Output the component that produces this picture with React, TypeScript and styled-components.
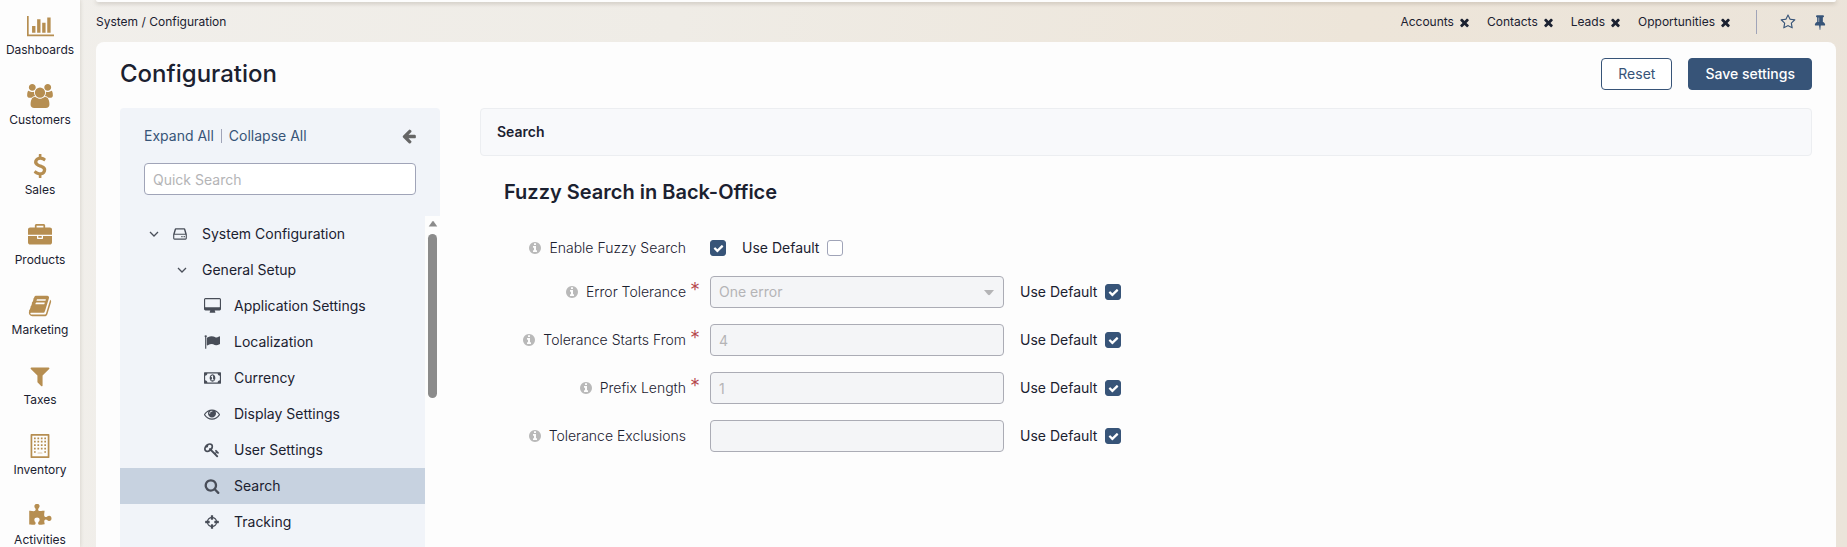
import React from "react";
import styled, { createGlobalStyle, css } from "styled-components";

const colors = {
  text: "#1b2130",
  primary: "#375478",
  gold: "#b68e51",
  panel: "#f1f4f9",
  surface: "#fdfdfd",
  field: "#f4f5f7",
  muted: "#b4b4b6",
  border: "#a0a4b8",
};

const GlobalStyle = createGlobalStyle`
  *, *::before, *::after { box-sizing: border-box; }
  html, body { margin: 0; padding: 0; }
  body {
    font-family: Inter, "Open Sans", sans-serif;
    font-size: 14px;
    line-height: 20px;
    color: ${colors.text};
  }
  button, input, select { font: inherit; color: inherit; }
  a { color: inherit; text-decoration: none; }
`;

/* ---------- icons ---------- */

const glyphs = {
  chart: { w: 2048, d: "M640 896v512h-256v-512h256zm384-512v1024h-256v-1024h256zm1024 1152v128h-2048v-1536h128v1408h1920zm-640-896v768h-256v-768h256zm384-384v1152h-256v-1152h256z" },
  users: { w: 1920, d: "M593 896q-162 5-265 128h-134q-82 0-138-40.5t-56-118.5q0-353 124-353 6 0 43.5 21t97.5 42.5 119 21.5q67 0 133-23-5 37-5 66 0 139 81 256zm1071 637q0 120-73 189.5t-194 69.5h-874q-121 0-194-69.5t-73-189.5q0-53 3.5-103.5t14-109 26.5-108.5 43-97.5 62-81 85.5-53.5 111.5-20q10 0 43 21.5t73 48 107 48 135 21.5 135-21.5 107-48 73-48 43-21.5q61 0 111.5 20t85.5 53.5 62 81 43 97.5 26.5 108.5 14 109 3.5 103.5zm-1024-1277q0 106-75 181t-181 75-181-75-75-181 75-181 181-75 181 75 75 181zm704 384q0 159-112.5 271.5t-271.5 112.5-271.5-112.5-112.5-271.5 112.5-271.5 271.5-112.5 271.5 112.5 112.5 271.5zm576 225q0 78-56 118.5t-138 40.5h-134q-103-123-265-128 81-117 81-256 0-29-5-66 66 23 133 23 59 0 119-21.5t97.5-42.5 43.5-21q124 0 124 353zm-128-609q0 106-75 181t-181 75-181-75-75-181 75-181 181-75 181 75 75 181z" },
  dollar: { w: 1792, d: "M1362 1185q0 153-99.5 263.5t-258.5 136.5v175q0 14-9 23t-23 9h-135q-13 0-22.5-9.5t-9.5-22.5v-175q-66-9-127.5-31t-101.5-44.5-74-48-46.5-37.5-17.5-18q-17-21-2-41l103-135q7-10 23-12 15-2 24 9l2 2q113 99 243 125 37 8 74 8 81 0 142.5-43t61.5-122q0-28-15-53t-33.5-42-58.5-37.5-66-32-80-32.5q-39-16-61.5-25t-61.5-26.5-62.5-31-56.5-35.5-53.5-42.5-43.5-49-35.5-58-21-66.5-8.5-78q0-138 98-242t255-134v-180q0-13 9.5-22.5t22.5-9.5h135q14 0 23 9t9 23v176q57 6 110.5 23t87 33.5 63.5 37.5 39 29 15 14q17 18 5 38l-81 146q-8 15-23 16-14 3-27-7-3-3-14.5-12t-39-26.5-58.5-32-74.5-26-85.5-11.5q-95 0-155 43t-60 111q0 26 8.5 48t29.5 41.5 39.5 33 56 31 60.5 27 70 27.5q53 20 81 31.5t76 35 75.5 42.5 62 50 53 63.5 31.5 76.5 13 94z" },
  briefcase: { w: 1792, d: "M640 256h512v-128h-512v128zm1152 640v480q0 66-47 113t-113 47h-1472q-66 0-113-47t-47-113v-480h672v160q0 26 19 45t45 19h320q26 0 45-19t19-45v-160h672zm-768 0v128h-256v-128h256zm768-480v384h-1792v-384q0-66 47-113t113-47h352v-160q0-40 28-68t68-28h576q40 0 68 28t28 68v160h352q66 0 113 47t47 113z" },
  book: { w: 1792, d: "M1703 478q40 57 18 129l-275 906q-19 64-76.5 107.5t-122.5 43.5h-923q-77 0-148.5-53.5t-99.5-131.5q-24-67-2-127 0-4 3-27t4-37q1-8-3-21.5t-3-19.5q2-11 8-21t16.5-23.5 16.5-23.5q23-38 45-91.5t30-91.5q3-10 .5-30t-.5-28q3-11 17-28t17-23q21-36 42-92t25-90q1-9-2.5-32t.5-28q4-13 22-30.5t22-22.5q19-26 42.5-84.5t27.5-96.5q1-8-3-25.5t-2-26.5q2-8 9-18t18-23 17-21q8-12 16.5-30.5t15-35 16-36 19.5-32 26.5-23.5 36-11.5 47.5 5.5l-1 3q38-9 51-9h761q74 0 114 56t18 130l-274 906q-36 119-71.5 153.5t-128.5 34.5h-869q-27 0-38 15-11 16-1 43 24 70 144 70h923q29 0 56-15.5t35-41.5l300-987q7-22 5-57 38 15 59 43zm-1064 2q-4 13 2 22.5t20 9.5h608q13 0 25.5-9.5t16.5-22.5l21-64q4-13-2-22.5t-20-9.5h-608q-13 0-25.5 9.5t-16.5 22.5zm-83 256q-4 13 2 22.5t20 9.5h608q13 0 25.5-9.5t16.5-22.5l21-64q4-13-2-22.5t-20-9.5h-608q-13 0-25.5 9.5t-16.5 22.5z" },
  filter: { w: 1792, d: "M1595 295q17 41-14 70l-493 493v742q0 42-39 59-13 5-25 5-27 0-45-19l-256-256q-19-19-19-45v-486l-493-493q-31-29-14-70 17-39 59-39h1280q42 0 59 39z" },
  building: { w: 1792, d: "M192 64q0-64 64-64h1280q64 0 64 64v1664q0 64-64 64h-1280q-64 0-64-64zM320 128v1536h384v-224q0-32 32-32h320q32 0 32 32v224h384v-1536zM448 256h128v128h-128zM704 256h128v128h-128zM960 256h128v128h-128zM1216 256h128v128h-128zM448 512h128v128h-128zM704 512h128v128h-128zM960 512h128v128h-128zM1216 512h128v128h-128zM448 768h128v128h-128zM704 768h128v128h-128zM960 768h128v128h-128zM1216 768h128v128h-128zM448 1024h128v128h-128zM704 1024h128v128h-128zM960 1024h128v128h-128zM1216 1024h128v128h-128zM448 1280h128v128h-128zM1216 1280h128v128h-128zM704 1440h384v224h-384z" },
  puzzle: { w: 1792, d: "M1755 1083q0 81-44.5 135t-123.5 54q-41 0-77.5-17.5t-59-38-56.5-38-71-17.5q-110 0-110 124 0 39 16 115t15 115v5q-22 0-33 1-34 3-97.5 11.5t-115.5 13.5-98 5q-61 0-103-26.5t-42-83.5q0-37 17.5-71t38-56.5 38-59 17.5-77.5q0-79-54-123.5t-135-44.5q-84 0-143 45.5t-59 127.5q0 43 15 83t33.5 64.5 33.5 53 15 50.5q0 45-46 89-37 35-117 35-95 0-245-24-9-2-27.5-4t-27.5-4l-13-2q-1 0-3-1-2 0-2-1v-1024q2 1 17.5 3.5t34 5 21.5 3.5q150 24 245 24 80 0 117-35 46-44 46-89 0-22-15-50.5t-33.5-53-33.5-64.5-15-83q0-82 59-127.5t144-45.5q80 0 134 44.5t54 123.5q0 41-17.5 77.5t-38 59-38 56.5-17.5 71q0 57 42 83.5t103 26.5q64 0 180-15t163-17v2q-1 2-3.5 17.5t-5 34-3.5 21.5q-24 150-24 245 0 80 35 117 44 46 89 46 22 0 50.5-15t53-33.5 64.5-33.5 83-15q82 0 127.5 59t45.5 143z" },
  desktop: { w: 1920, d: "M1792 992v-832q0-13-9.5-22.5t-22.5-9.5h-1600q-13 0-22.5 9.5t-9.5 22.5v832q0 13 9.5 22.5t22.5 9.5h1600q13 0 22.5-9.5t9.5-22.5zm128-832v1088q0 66-47 113t-113 47h-544q0 37 16 77.5t32 71 16 43.5q0 26-19 45t-45 19h-512q-26 0-45-19t-19-45q0-14 16-44t32-70 16-78h-544q-66 0-113-47t-47-113v-1088q0-66 47-113t113-47h1600q66 0 113 47t47 113z" },
  flag: { w: 1792, d: "M320 256q0 72-64 110v1266q0 13-9.5 22.5t-22.5 9.5h-64q-13 0-22.5-9.5t-9.5-22.5v-1266q-64-38-64-110 0-53 37.5-90.5t90.5-37.5 90.5 37.5 37.5 90.5zm1472 64v763q0 25-12.5 38.5t-39.5 27.5q-215 116-369 116-61 0-123.5-22t-108.5-48-115.5-48-142.5-22q-192 0-464 146-17 9-33 9-26 0-45-19t-19-45v-742q0-32 31-55 21-14 79-43 236-120 421-120 107 0 200 29t219 88q38 19 88 19 54 0 117.5-21t110-47 88-47 54.5-21q26 0 45 19t19 45z" },
  money: { w: 1920, d: "M768 1152h384v-96h-128v-448h-114l-148 137 77 80q42-37 55-57h2v288h-128v96zm512-256q0 70-21 142t-59.5 134-101.5 101-138 39-138-39-101.5-101-59.5-134-21-142 21-142 59.5-134 101.5-101 138-39 138 39 101.5 101 59.5 134 21 142zm512 256v-512q-106 0-181-75t-75-181h-1152q0 106-75 181t-181 75v512q106 0 181 75t75 181h1152q0-106 75-181t181-75zm128-832v1152q0 26-19 45t-45 19h-1792q-26 0-45-19t-19-45v-1152q0-26 19-45t45-19h1792q26 0 45 19t19 45z" },
  eye: { w: 1792, d: "M1664 960q-152-236-381-353 61 104 61 225 0 185-131.5 316.5t-316.5 131.5-316.5-131.5-131.5-316.5q0-121 61-225-229 117-381 353 133 205 333.5 326.5t434.5 121.5 434.5-121.5 333.5-326.5zm-720-384q0-20-14-34t-34-14q-125 0-214.5 89.5t-89.5 214.5q0 20 14 34t34 14 34-14 14-34q0-86 61-147t147-61q20 0 34-14t14-34zm848 384q0 34-20 69-140 230-376.5 368.5t-499.5 138.5-499.5-139-376.5-368q-20-35-20-69t20-69q140-229 376.5-368t499.5-139 499.5 139 376.5 368q20 35 20 69z" },
  key: { w: 1792, d: "M832 512q0-80-56-136t-136-56-136 56-56 136q0 42 19 83-41-19-83-19-80 0-136 56t-56 136 56 136 136 56 136-56 56-136q0-42-19-83 41 19 83 19 80 0 136-56t56-136zm851 704q0 17-49 66t-66 49q-9 0-28.5-16t-36.5-33-38.5-40-24.5-26l-96 96 220 220q28 28 28 68 0 42-39 81t-81 39q-40 0-68-28l-671-671q-176 131-365 131-163 0-265.5-102.5t-102.5-265.5q0-160 95-313t248-248 313-95q163 0 265.5 102.5t102.5 265.5q0 189-131 365l355 355 96-96q-3-3-26-24.5t-40-38.5-33-36.5-16-28.5q0-17 49-66t66-49q13 0 23 10 6 6 46 44.5t82 79.5 86.5 86 73 78 28.5 41z" },
  search: { w: 1792, d: "M1216 832q0-185-131.5-316.5t-316.5-131.5-316.5 131.5-131.5 316.5 131.5 316.5 316.5 131.5 316.5-131.5 131.5-316.5zm512 832q0 52-38 90t-90 38q-54 0-90-38l-343-342q-179 124-399 124-143 0-273.5-55.5t-225-150-150-225-55.5-273.5 55.5-273.5 150-225 225-150 273.5-55.5 273.5 55.5 225 150 150 225 55.5 273.5q0 220-124 399l343 343q37 37 37 90z" },
  crosshairs: { w: 1792, d: "M1325 1024h-109q-26 0-45-19t-19-45v-128q0-26 19-45t45-19h109q-32-108-112.5-188.5t-188.5-112.5v109q0 26-19 45t-45 19h-128q-26 0-45-19t-19-45v-109q-108 32-188.5 112.5t-112.5 188.5h109q26 0 45 19t19 45v128q0 26-19 45t-45 19h-109q32 108 112.5 188.5t188.5 112.5v-109q0-26 19-45t45-19h128q26 0 45 19t19 45v109q108-32 188.5-112.5t112.5-188.5zm339-192v128q0 26-19 45t-45 19h-143q-37 161-154.5 278.5t-278.5 154.5v143q0 26-19 45t-45 19h-128q-26 0-45-19t-19-45v-143q-161-37-278.5-154.5t-154.5-278.5h-143q-26 0-45-19t-19-45v-128q0-26 19-45t45-19h143q37-161 154.5-278.5t278.5-154.5v-143q0-26 19-45t45-19h128q26 0 45 19t19 45v143q161 37 278.5 154.5t154.5 278.5h143q26 0 45 19t19 45z" },
  drive: { w: 1792, d: "M420 256h952q90 0 116 90l158 520q18 60 18 110v400q0 160-160 160h-1216q-160 0-160-160v-400q0-50 18-110l158-520q26-90 116-90zM456 384l-142 480h1164l-142-480zM256 992v384q0 32 32 32h1216q32 0 32-32v-384zM1040 1120h144v144h-144zM1296 1120h144v144h-144z" },
  close: { w: 1792, d: "M1490 1322q0 40-28 68l-136 136q-28 28-68 28t-68-28l-294-294-294 294q-28 28-68 28t-68-28l-136-136q-28-28-28-68t28-68l294-294-294-294q-28-28-28-68t28-68l136-136q28-28 68-28t68 28l294 294 294-294q28-28 68-28t68 28l136 136q28 28 28 68t-28 68l-294 294 294 294q28 28 28 68z" },
  star: { w: 1792, d: "M1201 1004l306-297-422-62-189-382-189 382-422 62 306 297-73 421 378-199 377 199zm527-357q0 22-26 48l-363 354 86 500q1 7 1 20 0 50-41 50-19 0-40-12l-449-236-449 236q-22 12-40 12-21 0-31.5-14.5t-10.5-35.5q0-6 2-20l86-500-364-354q-25-27-25-48 0-37 56-46l502-73 225-455q19-41 49-41t49 41l225 455 502 73q56 9 56 46z" },
  pin: { w: 1792, d: "M800 864v-448q0-14-9-23t-23-9-23 9-9 23v448q0 14 9 23t23 9 23-9 9-23zm672 352q0 26-19 45t-45 19h-429l-51 483q-2 12-10.5 20.5t-20.5 8.5h-1q-27 0-32-27l-76-485h-404q-26 0-45-19t-19-45q0-123 78.5-221.5t177.5-98.5v-512q-52 0-90-38t-38-90 38-90 90-38h640q52 0 90 38t38 90-38 90-90 38v512q99 0 177.5 98.5t78.5 221.5z" },
  arrow: { w: 1792, d: "M1664 896v128q0 53-32.5 90.5t-84.5 37.5h-704l293 294q38 36 38 90t-38 90l-75 76q-37 37-90 37-52 0-91-37l-651-652q-37-37-37-90 0-52 37-91l651-650q38-38 91-38 52 0 90 38l75 74q38 38 38 91t-38 91l-293 293h704q52 0 84.5 37.5t32.5 90.5z" },
  info: { w: 1792, d: "M1152 1376v-160q0-14-9-23t-23-9h-96v-512q0-14-9-23t-23-9h-320q-14 0-23 9t-9 23v160q0 14 9 23t23 9h96v320h-96q-14 0-23 9t-9 23v160q0 14 9 23t23 9h448q14 0 23-9t9-23zm-128-896v-160q0-14-9-23t-23-9h-192q-14 0-23 9t-9 23v160q0 14 9 23t23 9h192q14 0 23-9t9-23zm640 416q0 209-103 385.5t-279.5 279.5-385.5 103-385.5-103-279.5-279.5-103-385.5 103-385.5 279.5-279.5 385.5-103 385.5 103 279.5 279.5 103 385.5z" },
  check: { w: 1792, d: "M1671 566q0 40-28 68l-724 724-136 136q-28 28-68 28t-68-28l-136-136-362-362q-28-28-28-68t28-68l136-136q28-28 68-28t68 28l294 295 656-657q28-28 68-28t68 28l136 136q28 28 28 68z" },
  caret: { w: 1792, d: "M256 640h1280l-512 600q-128 120-256 0z" },
  up: { w: 1792, d: "M128 1344h1536l-640-900q-128-130-256 0z" },
};

type GlyphName = keyof typeof glyphs;

const Svg = styled.svg`
  display: block;
  flex: none;
  fill: currentColor;
`;

function Icon({ name, size }: { name: GlyphName; size: number }) {
  const { w, d } = glyphs[name];
  return (
    <Svg viewBox={`0 0 ${w} 1792`} width={Math.round((w / 1792) * size)} height={size} fillRule="evenodd" aria-hidden="true">
      <path d={d} />
    </Svg>
  );
}

const ChevronSvg = styled.svg`
  display: block;
  fill: none;
  stroke: #4a4f5a;
  stroke-width: 1.3;
`;

const Chevron = () => (
  <ChevronSvg viewBox="0 0 10 10" width="10" height="10" aria-hidden="true">
    <path d="M1 3l4 4 4-4" />
  </ChevronSvg>
);

/* ---------- page frame ---------- */

const Shell = styled.div`
  display: flex;
  height: 100vh;
  overflow: hidden;
  background: linear-gradient(100deg, #f1efeb 0%, #efece6 35%, #ede5d9 70%, #ebe4da 100%);
`;

const MainMenu = styled.nav`
  display: flex;
  flex-direction: column;
  flex: none;
  gap: 16px;
  width: 80px;
  padding-top: 14px;
  background: ${colors.surface};
  box-shadow: 0 0 4px rgba(60, 50, 30, 0.18);
`;

const MenuLink = styled.a`
  display: flex;
  flex-direction: column;
  flex: none;
  align-items: center;
  gap: 4px;
  height: 54px;
  color: ${colors.gold};
`;

const MenuLabel = styled.span`
  font-size: 12px;
  line-height: 16px;
  color: ${colors.text};
`;

const Workspace = styled.div`
  display: flex;
  flex: 1;
  flex-direction: column;
  min-width: 0;
  padding: 0 11px 0 16px;
`;

const HeaderEdge = styled.div`
  flex: none;
  height: 2px;
  background: ${colors.surface};
  border-radius: 0 0 8px 8px;
  box-shadow: 0 1px 4px rgba(60, 50, 30, 0.35);
`;

const TopLine = styled.div`
  display: flex;
  flex: none;
  align-items: center;
  justify-content: space-between;
  height: 40px;
  padding-right: 8px;
  font-size: 12px;
  line-height: 16px;
`;

const Pins = styled.div`
  display: flex;
  align-items: center;
  gap: 16px;
`;

const PinItem = styled.span`
  display: flex;
  align-items: center;
  gap: 4px;
`;

const IconButton = styled.button<{ $color?: string }>`
  display: flex;
  padding: 0;
  border: 0;
  background: none;
  color: ${(p) => p.$color ?? colors.text};
  cursor: pointer;
`;

const PinTools = styled.div`
  display: flex;
  align-items: center;
  gap: 16px;
  height: 24px;
  margin-left: 8px;
  padding-left: 23px;
  border-left: 1px solid ${colors.border};
`;

const Card = styled.main`
  display: flex;
  flex: 1;
  flex-direction: column;
  min-height: 0;
  padding: 16px 24px 0;
  border-radius: 8px 8px 0 0;
  background: ${colors.surface};
`;

const TitleBar = styled.header`
  display: flex;
  flex: none;
  align-items: center;
  justify-content: space-between;
  height: 32px;
  margin-bottom: 18px;
`;

const PageTitle = styled.h1`
  margin: 0;
  font-size: 24px;
  font-weight: 500;
  line-height: 32px;
`;

const Actions = styled.div`
  display: flex;
  gap: 16px;
`;

const Button = styled.button<{ $primary?: boolean }>`
  height: 32px;
  padding: 0 16px;
  border: 1px solid ${colors.primary};
  border-radius: 4px;
  background: #fff;
  color: ${colors.primary};
  cursor: pointer;
  ${(p) =>
    p.$primary &&
    css`
      background: ${colors.primary};
      color: #fff;
      font-weight: 500;
    `}
`;

const Columns = styled.div`
  display: flex;
  flex: 1;
  gap: 40px;
  min-height: 0;
`;

/* ---------- settings tree ---------- */

const TreePanel = styled.aside`
  display: flex;
  flex: none;
  flex-direction: column;
  width: 320px;
  border-radius: 4px 4px 0 0;
  background: ${colors.panel};
  overflow: hidden;
`;

const TreeTools = styled.div`
  display: flex;
  flex: none;
  align-items: center;
  justify-content: space-between;
  padding: 18px 23px 17px 24px;
`;

const ToolLinks = styled.div`
  display: flex;
  align-items: center;
  color: ${colors.primary};

  a + a {
    margin-left: 7px;
    padding-left: 7px;
    border-left: 1px solid ${colors.border};
    line-height: 14px;
  }
`;

const QuickSearch = styled.input`
  flex: none;
  height: 32px;
  margin: 0 24px 21px;
  padding: 0 8px;
  border: 1px solid ${colors.border};
  border-radius: 4px;
  background: #fff;

  &::placeholder {
    color: ${colors.muted};
    opacity: 1;
  }
`;

const TreeScroll = styled.div`
  display: flex;
  flex: 1;
  min-height: 0;
`;

const TreeList = styled.div`
  flex: 1;
  overflow: hidden;
`;

const TreeRow = styled.a<{ $level: number; $active?: boolean }>`
  display: flex;
  align-items: center;
  height: 36px;
  padding-left: ${(p) => [29, 57, 82][p.$level]}px;
  background: ${(p) => (p.$active ? "#c7d2e0" : "transparent")};
`;

const IconCell = styled.span<{ $width: number }>`
  display: flex;
  flex: none;
  width: ${(p) => p.$width}px;
  color: #484d58;
`;

const LeafIcon = styled(IconCell)`
  justify-content: center;
  margin-right: 12px;
`;

const ScrollTrack = styled.div`
  display: flex;
  flex: none;
  flex-direction: column;
  align-items: center;
  gap: 5px;
  width: 15px;
  padding-top: 3px;
  background: ${colors.surface};
  color: #8b8b8b;
`;

const ScrollThumb = styled.div`
  width: 9px;
  height: 164px;
  border-radius: 5px;
  background: #8b8b8b;
`;

/* ---------- form ---------- */

const Content = styled.section`
  flex: 1;
  min-width: 0;
`;

const SectionHead = styled.h2`
  margin: 0;
  padding: 13px 16px;
  border: 1px solid #eceef1;
  border-radius: 4px;
  background: #f8f9fb;
  font-size: 14px;
  font-weight: 600;
  line-height: 20px;
`;

const GroupTitle = styled.h3`
  margin: 24px 24px 32px;
  font-size: 20px;
  font-weight: 600;
  line-height: 24px;
`;

const FormRows = styled.form`
  display: flex;
  flex-direction: column;
  gap: 16px;
`;

const FormRow = styled.div<{ $compact?: boolean }>`
  display: flex;
  align-items: center;
  height: ${(p) => (p.$compact ? 24 : 32)}px;
`;

const LabelCell = styled.div`
  display: flex;
  flex: none;
  align-items: center;
  justify-content: flex-end;
  gap: 7px;
  width: 206px;
  font-weight: 300;

  svg {
    color: #b9b9b9;
  }
`;

const RequiredMark = styled.span`
  flex: none;
  align-self: flex-start;
  width: 24px;
  padding-left: 4px;
  font-size: 20px;
  line-height: 28px;
  font-weight: 300;
  color: #b5474b;
`;

const fieldStyle = css`
  width: 294px;
  height: 32px;
  padding: 0 8px;
  border: 1px solid #abacb5;
  border-radius: 4px;
  background: ${colors.field};
  color: ${colors.muted};
  opacity: 1;
`;

const TextField = styled.input`
  ${fieldStyle}
`;

const SelectField = styled.select`
  ${fieldStyle}
  appearance: none;
`;

const SelectBox = styled.div`
  display: grid;
  align-items: center;
  color: ${colors.muted};

  > * {
    grid-area: 1 / 1;
  }
  svg {
    justify-self: end;
    margin-right: 8px;
    pointer-events: none;
  }
`;

const DefaultLabel = styled.label`
  display: flex;
  align-items: center;
  gap: 8px;
  margin-left: 16px;
`;

const CheckBox = styled.span`
  display: grid;
  place-items: center;
  width: 16px;
  height: 16px;
  color: #fff;

  > * {
    grid-area: 1 / 1;
  }
  svg {
    pointer-events: none;
  }
`;

const CheckInput = styled.input`
  appearance: none;
  width: 16px;
  height: 16px;
  margin: 0;
  border: 1px solid ${colors.border};
  border-radius: 3px;
  background: #fff;

  &:checked {
    border-color: ${colors.primary};
    background: ${colors.primary};
  }
`;

function Check({ id, checked }: { id?: string; checked?: boolean }) {
  return (
    <CheckBox>
      <CheckInput id={id} type="checkbox" defaultChecked={checked} />
      <Icon name="check" size={11} />
    </CheckBox>
  );
}

/* ---------- data ---------- */

const menu: [GlyphName, string][] = [
  ["chart", "Dashboards"],
  ["users", "Customers"],
  ["dollar", "Sales"],
  ["briefcase", "Products"],
  ["book", "Marketing"],
  ["filter", "Taxes"],
  ["building", "Inventory"],
  ["puzzle", "Activities"],
];

const leaves: [GlyphName, string][] = [
  ["desktop", "Application Settings"],
  ["flag", "Localization"],
  ["money", "Currency"],
  ["eye", "Display Settings"],
  ["key", "User Settings"],
  ["search", "Search"],
  ["crosshairs", "Tracking"],
];

const fields = [
  { id: "tolerance", label: "Error Tolerance", required: true, value: "One error", select: true },
  { id: "starts", label: "Tolerance Starts From", required: true, value: "4" },
  { id: "prefix", label: "Prefix Length", required: true, value: "1" },
  { id: "exclusions", label: "Tolerance Exclusions", required: false, value: "" },
];

export default function App() {
  return (
    <>
      <GlobalStyle />
      <Shell>
        <MainMenu>
          {menu.map(([icon, label]) => (
            <MenuLink href="#" key={label}>
              <Icon name={icon} size={24} />
              <MenuLabel>{label}</MenuLabel>
            </MenuLink>
          ))}
        </MainMenu>
        <Workspace>
          <HeaderEdge />
          <TopLine>
            <span>System / Configuration</span>
            <Pins>
              {["Accounts", "Contacts", "Leads", "Opportunities"].map((name) => (
                <PinItem key={name}>
                  <a href="#">{name}</a>
                  <IconButton aria-label={`Close ${name}`}>
                    <Icon name="close" size={13} />
                  </IconButton>
                </PinItem>
              ))}
              <PinTools>
                <IconButton aria-label="Favorite" $color={colors.primary}>
                  <Icon name="star" size={16} />
                </IconButton>
                <IconButton aria-label="Pin" $color={colors.primary}>
                  <Icon name="pin" size={16} />
                </IconButton>
              </PinTools>
            </Pins>
          </TopLine>
          <Card>
            <TitleBar>
              <PageTitle>Configuration</PageTitle>
              <Actions>
                <Button>Reset</Button>
                <Button $primary>Save settings</Button>
              </Actions>
            </TitleBar>
            <Columns>
              <TreePanel>
                <TreeTools>
                  <ToolLinks>
                    <a href="#">Expand All</a>
                    <a href="#">Collapse All</a>
                  </ToolLinks>
                  <IconButton aria-label="Hide panel" $color="#666">
                    <Icon name="arrow" size={16} />
                  </IconButton>
                </TreeTools>
                <QuickSearch type="text" placeholder="Quick Search" aria-label="Quick Search" />
                <TreeScroll>
                  <TreeList>
                    <TreeRow href="#" $level={0}>
                      <IconCell $width={23}><Chevron /></IconCell>
                      <IconCell $width={30}><Icon name="drive" size={16} /></IconCell>
                      System Configuration
                    </TreeRow>
                    <TreeRow href="#" $level={1}>
                      <IconCell $width={25}><Chevron /></IconCell>
                      General Setup
                    </TreeRow>
                    {leaves.map(([icon, label]) => (
                      <TreeRow href="#" key={label} $level={2} $active={label === "Search"}>
                        <LeafIcon $width={20}><Icon name={icon} size={16} /></LeafIcon>
                        {label}
                      </TreeRow>
                    ))}
                  </TreeList>
                  <ScrollTrack>
                    <Icon name="up" size={10} />
                    <ScrollThumb />
                  </ScrollTrack>
                </TreeScroll>
              </TreePanel>
              <Content>
                <SectionHead>Search</SectionHead>
                <GroupTitle>Fuzzy Search in Back-Office</GroupTitle>
                <FormRows>
                  <FormRow $compact>
                    <LabelCell>
                      <Icon name="info" size={14} />
                      <label htmlFor="enable">Enable Fuzzy Search</label>
                    </LabelCell>
                    <RequiredMark />
                    <Check id="enable" checked />
                    <DefaultLabel>
                      Use Default
                      <Check />
                    </DefaultLabel>
                  </FormRow>
                  {fields.map((f) => (
                    <FormRow key={f.id}>
                      <LabelCell>
                        <Icon name="info" size={14} />
                        <label htmlFor={f.id}>{f.label}</label>
                      </LabelCell>
                      <RequiredMark>{f.required ? "*" : ""}</RequiredMark>
                      {f.select ? (
                        <SelectBox>
                          <SelectField id={f.id} disabled>
                            <option>{f.value}</option>
                          </SelectField>
                          <Icon name="caret" size={14} />
                        </SelectBox>
                      ) : (
                        <TextField id={f.id} type="text" defaultValue={f.value} disabled />
                      )}
                      <DefaultLabel>
                        Use Default
                        <Check checked />
                      </DefaultLabel>
                    </FormRow>
                  ))}
                </FormRows>
              </Content>
            </Columns>
          </Card>
        </Workspace>
      </Shell>
    </>
  );
}
